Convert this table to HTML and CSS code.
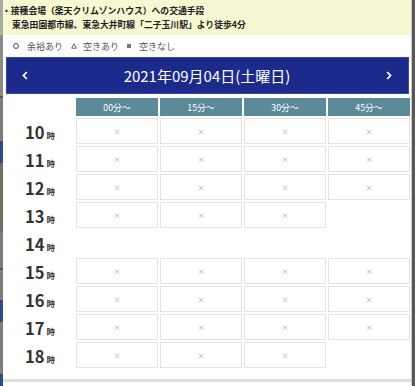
FILE: index.html
```html
<!DOCTYPE html>
<html lang="ja">
<head>
<meta charset="utf-8">
<title>予約カレンダー</title>
<link rel="stylesheet" href="styles.css">
</head>
<body>
<div class="page">
  <div class="backdrop-left"></div>
  <main class="modal">
    <div class="notice">
      <p class="notice-title">・接種会場（楽天クリムゾンハウス）への交通手段</p>
      <p class="notice-body">東急田園都市線、東急大井町線「二子玉川駅」より徒歩4分</p>
    </div>
    <div class="legend">
      <span class="mark mark-circle"></span><span class="legend-text">余裕あり</span>
      <span class="mark mark-tri"><svg width="6" height="6" viewBox="0 0 6 6"><path d="M3 0.8 L5.4 5.2 L0.6 5.2 Z" fill="none" stroke="#666" stroke-width="1"/></svg></span><span class="legend-text">空きあり</span>
      <span class="mark mark-square"></span><span class="legend-text">空きなし</span>
    </div>
    <section class="calendar">
      <div class="cal-head">
        <svg class="chev" width="6" height="9" viewBox="0 0 6 9"><path d="M4.8 1 L1.5 4.5 L4.8 8" fill="none" stroke="#fff" stroke-width="1.8"/></svg>
        <h1 class="cal-title">2021年09月04日(土曜日)</h1>
        <svg class="chev" width="6" height="9" viewBox="0 0 6 9"><path d="M1.2 1 L4.5 4.5 L1.2 8" fill="none" stroke="#fff" stroke-width="1.8"/></svg>
      </div>
      <div class="grid">
        <div class="corner"></div>
        <div class="col-head">00分〜</div>
        <div class="col-head">15分〜</div>
        <div class="col-head">30分〜</div>
        <div class="col-head">45分〜</div>

        <div class="hour"><b>10</b><small>時</small></div>
        <div class="slot">×</div><div class="slot">×</div><div class="slot">×</div><div class="slot">×</div>

        <div class="hour"><b>11</b><small>時</small></div>
        <div class="slot">×</div><div class="slot">×</div><div class="slot">×</div><div class="slot">×</div>

        <div class="hour"><b>12</b><small>時</small></div>
        <div class="slot">×</div><div class="slot">×</div><div class="slot">×</div><div class="slot">×</div>

        <div class="hour"><b>13</b><small>時</small></div>
        <div class="slot">×</div><div class="slot">×</div><div class="slot">×</div><div class="none"></div>

        <div class="hour"><b>14</b><small>時</small></div>
        <div class="none"></div><div class="none"></div><div class="none"></div><div class="none"></div>

        <div class="hour"><b>15</b><small>時</small></div>
        <div class="slot">×</div><div class="slot">×</div><div class="slot">×</div><div class="slot">×</div>

        <div class="hour"><b>16</b><small>時</small></div>
        <div class="slot">×</div><div class="slot">×</div><div class="slot">×</div><div class="slot">×</div>

        <div class="hour"><b>17</b><small>時</small></div>
        <div class="slot">×</div><div class="slot">×</div><div class="slot">×</div><div class="slot">×</div>

        <div class="hour"><b>18</b><small>時</small></div>
        <div class="slot">×</div><div class="slot">×</div><div class="slot">×</div><div class="none"></div>
      </div>
    </section>
    <div class="footer-line"></div>
  </main>
  <div class="backdrop-right"></div>
</div>
</body>
</html>
```

FILE: styles.css
```css
* { box-sizing: border-box; }
html, body { margin: 0; padding: 0; }
body {
  width: 415px;
  height: 386px;
  overflow: hidden;
  background: #fff;
  font-family: "Noto Sans CJK JP", "Noto Sans", sans-serif;
  color: #333;
}
.page {
  display: flex;
  height: 386px;
}
.backdrop-left {
  width: 3px;
  flex: none;
  background: linear-gradient(to bottom,
    #a9a9a6 0, #a9a9a6 35px,
    #8a8a8a 35px, #8a8a8a 96px,
    #3b5d93 96px, #3b5d93 98px,
    #7d7d7d 98px, #7d7d7d 141px,
    #2d4f86 141px, #2d4f86 163px,
    #70705e 163px, #70705e 232px,
    #7d7d7d 232px, #7d7d7d 268px,
    #3b5d93 268px, #3b5d93 270px,
    #7d7d7d 270px, #7d7d7d 300px,
    #2d4f86 300px, #2d4f86 322px,
    #7d7d7d 322px, #7d7d7d 374px,
    #2d4f86 374px);
}
.backdrop-right {
  width: 4px;
  flex: none;
  border-left: 1px solid #c9c9c9;
  background: #585858;
}
.modal {
  width: 408px;
  flex: none;
  background: #fff;
  display: flex;
  flex-direction: column;
}
.notice {
  background: #f7f7d2;
  padding: 4px 0 3px 0;
  height: 35px;
}
.notice p {
  margin: 0;
  font-size: 8.8px;
  line-height: 14px;
  font-weight: 700;
  color: #222;
  white-space: nowrap;
}
.notice-title { margin-left: -1px !important; }
.notice-body { padding-left: 9px; }
.legend {
  height: 22px;
  display: flex;
  align-items: center;
  padding-left: 10px;
  font-size: 9px;
  color: #555;
}
.mark {
  display: inline-block;
  flex: none;
}
.mark-circle {
  width: 6px;
  height: 6px;
  border: 1px solid #555;
  border-radius: 50%;
  margin-right: 8px;
}
.mark-tri {
  width: 6px;
  height: 6px;
  display: flex;
  margin-right: 6px;
}
.mark-square {
  width: 4px;
  height: 4px;
  background: #777;
  margin-right: 8px;
}
.legend-text { margin-right: 8px; }
.calendar {
  padding: 0 1px 0 3px;
}
.cal-head {
  height: 37px;
  margin-right: 1px;
  background: #1c2b8b;
  border: 1px solid #3848a0;
  display: flex;
  align-items: center;
  justify-content: space-between;
  padding: 0 16px 0 15px;
}
.cal-title {
  margin: 0;
  font-size: 15px;
  font-weight: 400;
  color: #fff;
  line-height: 1;
}
.chev { display: block; }
.grid {
  margin-top: 4px;
  display: grid;
  grid-template-columns: 68px repeat(4, 82px);
  grid-template-rows: 18px repeat(9, 26px);
  gap: 2px;
}
.col-head {
  background: #5c8a99;
  color: #fff;
  font-size: 8.8px;
  display: flex;
  align-items: center;
  justify-content: center;
}
.hour {
  display: flex;
  align-items: baseline;
  justify-content: center;
  padding-top: 1px;
  gap: 2px;
}
.hour b {
  font-size: 16.5px;
  font-weight: 700;
  color: #333;
  line-height: 26px;
}
.hour small {
  font-size: 8.5px;
  font-weight: 700;
  color: #444;
}
.slot {
  border: 1px solid #e3e3e3;
  display: flex;
  align-items: center;
  justify-content: center;
  font-size: 7px;
  color: #999;
}
.footer-line {
  margin-top: 11px;
  height: 3px;
  background: #dedede;
}
```
